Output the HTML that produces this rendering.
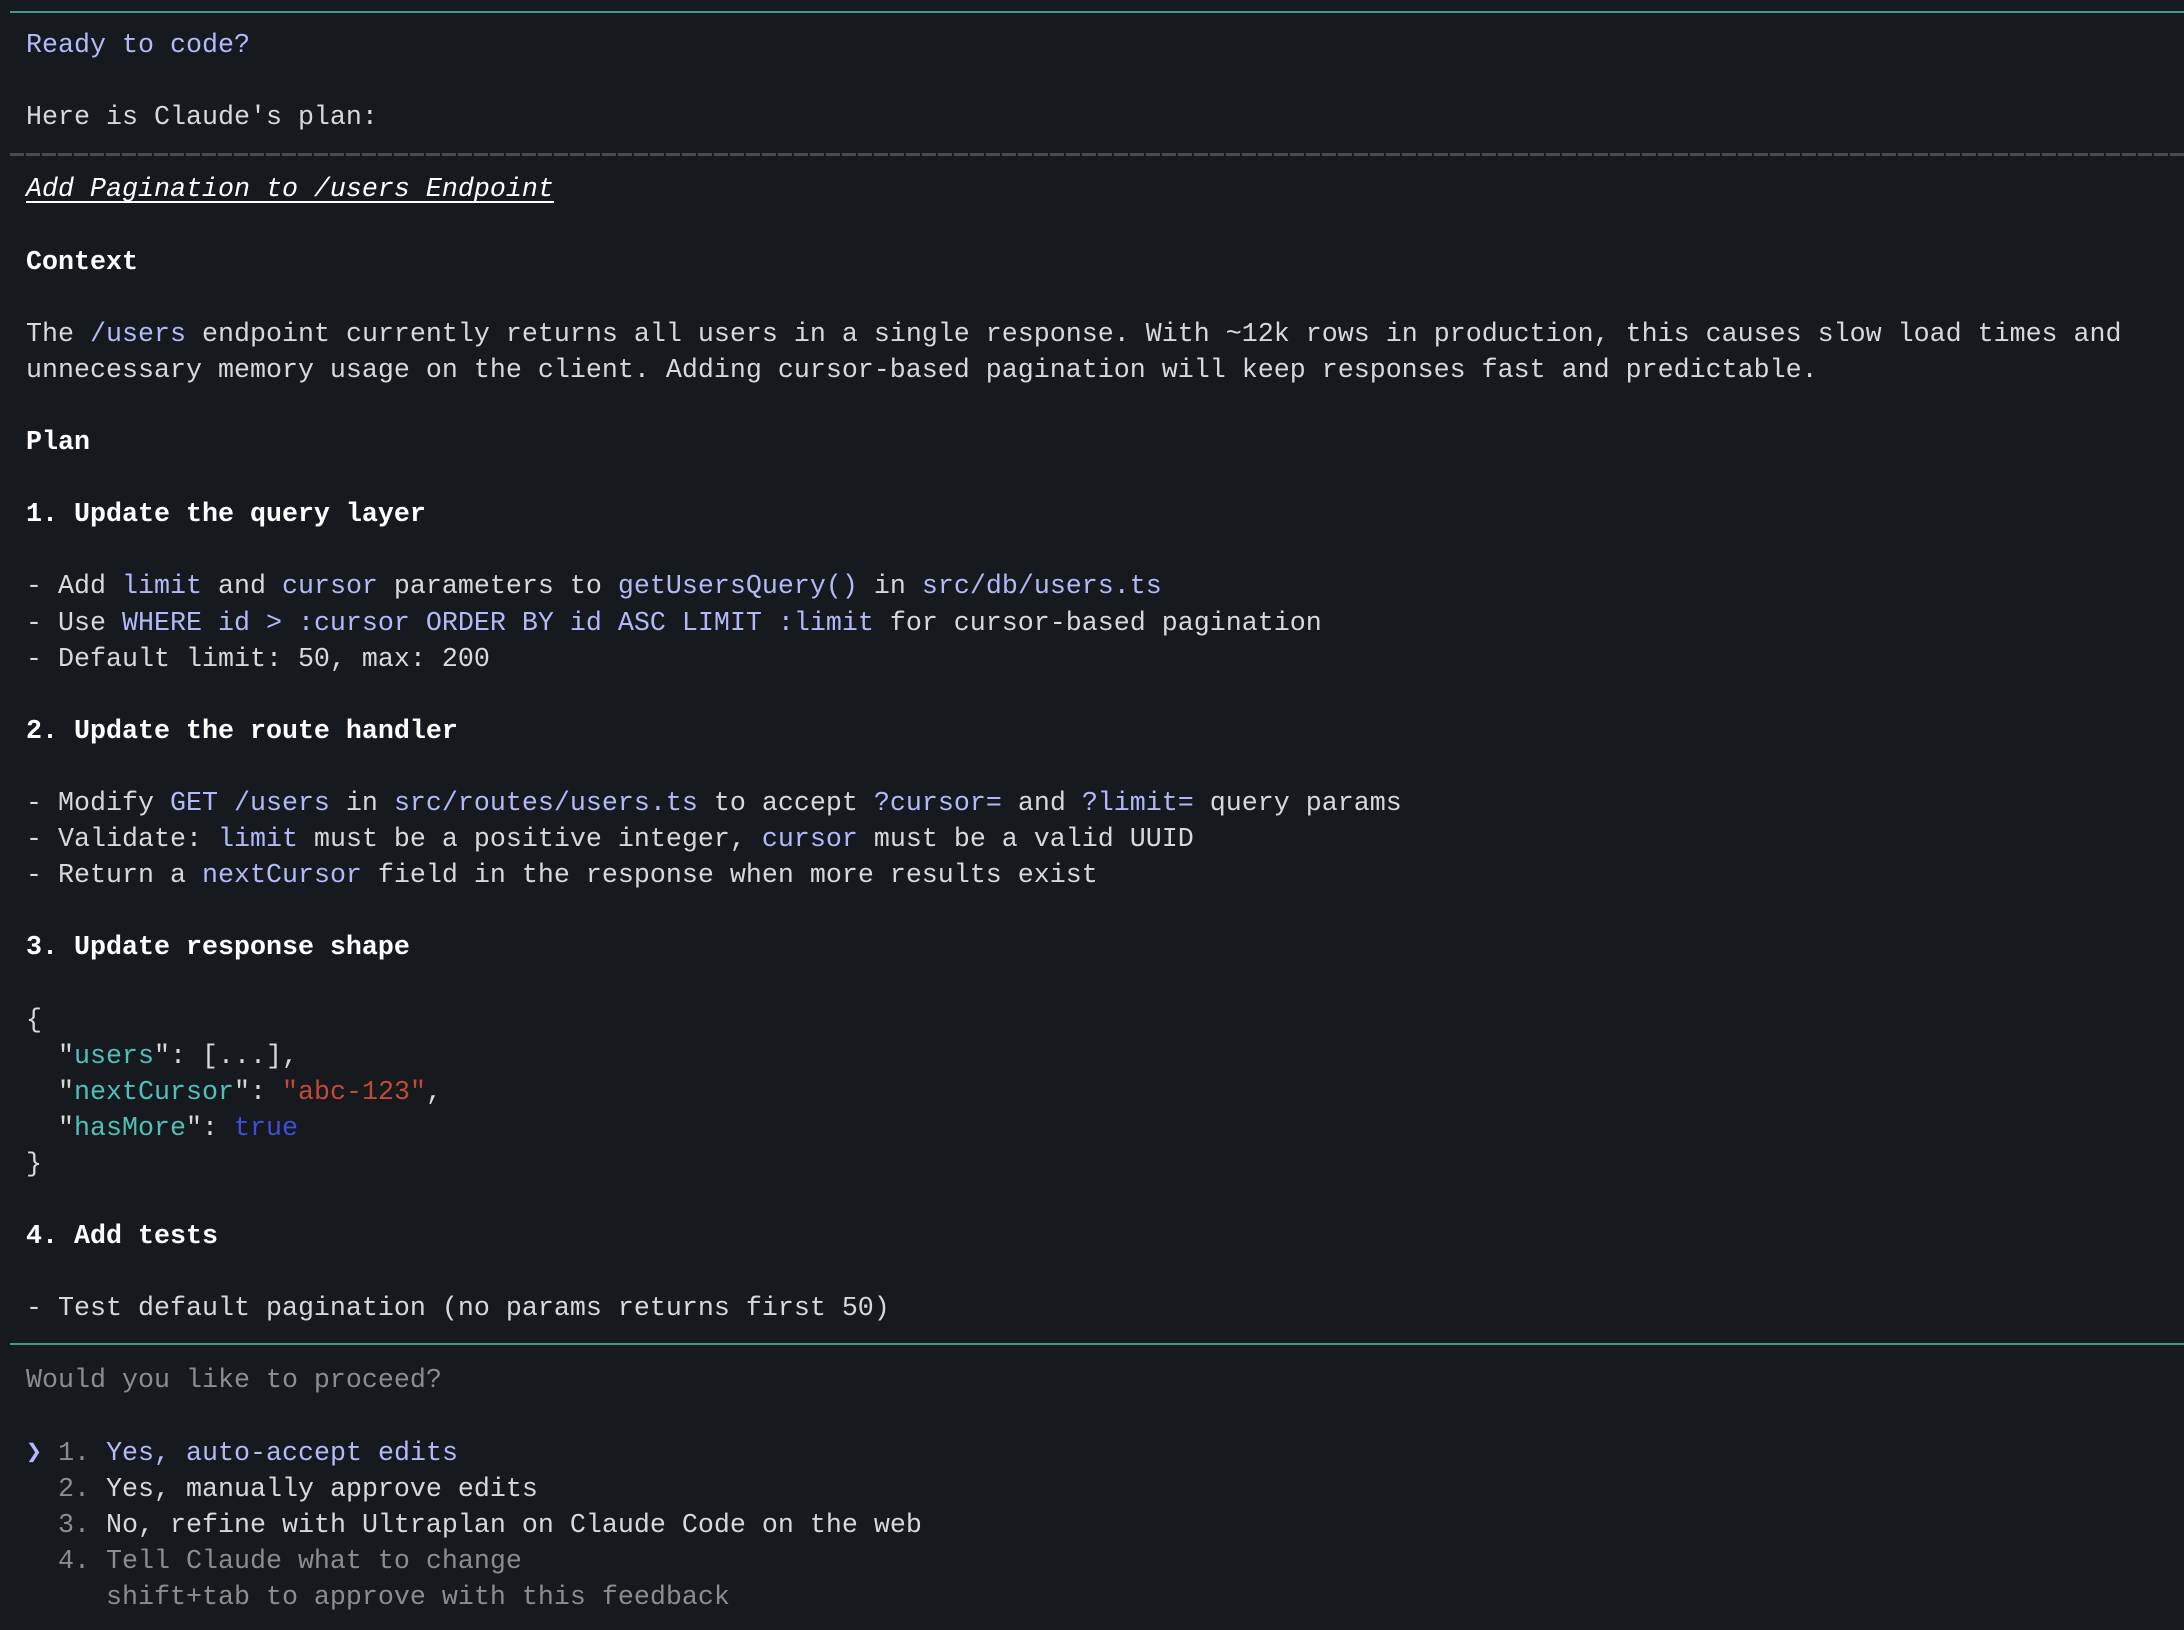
<!DOCTYPE html>
<html><head><meta charset="utf-8"><style>
html,body{margin:0;padding:0;background:#16191d;width:2184px;height:1630px;overflow:hidden}
.t{position:absolute;left:26px;top:28px;font-family:"Liberation Mono",monospace;font-size:26.67px;line-height:36.1px;color:#d8d8d8}
.t div{height:36.1px;white-space:pre}
.b{color:#b1b9f9}.w{color:#fff}.h{color:#fff;font-weight:bold}
.k{color:#4fc1b9}.s{color:#c4493a}.tr{color:#3d4fd8}.g{color:#8c8c8c}
.rule{position:absolute;left:10px;right:0;height:2px;background:#3f9a8c}
.dash{position:absolute;left:10px;right:0;top:153px;height:3px;background:repeating-linear-gradient(90deg,#4a4a4a 0 14px,transparent 14px 16px)}
</style></head><body>
<div class="rule" style="top:11px"></div>
<div class="dash"></div>
<div class="rule" style="top:1343px"></div>
<div class="t"><div class="b">Ready to code?</div><div> </div><div>Here is Claude's plan:</div><div> </div><div class="w" style="font-style:italic;text-decoration:underline;text-underline-offset:5px">Add Pagination to /users Endpoint</div><div> </div><div class="h">Context</div><div> </div><div>The <span class="b">/users</span> endpoint currently returns all users in a single response. With ~12k rows in production, this causes slow load times and</div><div>unnecessary memory usage on the client. Adding cursor-based pagination will keep responses fast and predictable.</div><div> </div><div class="h">Plan</div><div> </div><div class="h">1. Update the query layer</div><div> </div><div>- Add <span class="b">limit</span> and <span class="b">cursor</span> parameters to <span class="b">getUsersQuery()</span> in <span class="b">src/db/users.ts</span></div><div>- Use <span class="b">WHERE id &gt; :cursor ORDER BY id ASC LIMIT :limit</span> for cursor-based pagination</div><div>- Default limit: 50, max: 200</div><div> </div><div class="h">2. Update the route handler</div><div> </div><div>- Modify <span class="b">GET /users</span> in <span class="b">src/routes/users.ts</span> to accept <span class="b">?cursor=</span> and <span class="b">?limit=</span> query params</div><div>- Validate: <span class="b">limit</span> must be a positive integer, <span class="b">cursor</span> must be a valid UUID</div><div>- Return a <span class="b">nextCursor</span> field in the response when more results exist</div><div> </div><div class="h">3. Update response shape</div><div> </div><div>{</div><div>  "<span class="k">users</span>": [...],</div><div>  "<span class="k">nextCursor</span>": <span class="s">"abc-123"</span>,</div><div>  "<span class="k">hasMore</span>": <span class="tr">true</span></div><div>}</div><div> </div><div class="h">4. Add tests</div><div> </div><div>- Test default pagination (no params returns first 50)</div><div> </div><div class="g">Would you like to proceed?</div><div> </div><div><span class="b">❯</span> <span class="g">1.</span> <span class="b">Yes, auto-accept edits</span></div><div>  <span class="g">2.</span> Yes, manually approve edits</div><div>  <span class="g">3.</span> No, refine with Ultraplan on Claude Code on the web</div><div class="g">  4. Tell Claude what to change</div><div class="g">     shift+tab to approve with this feedback</div></div>
</body></html>
